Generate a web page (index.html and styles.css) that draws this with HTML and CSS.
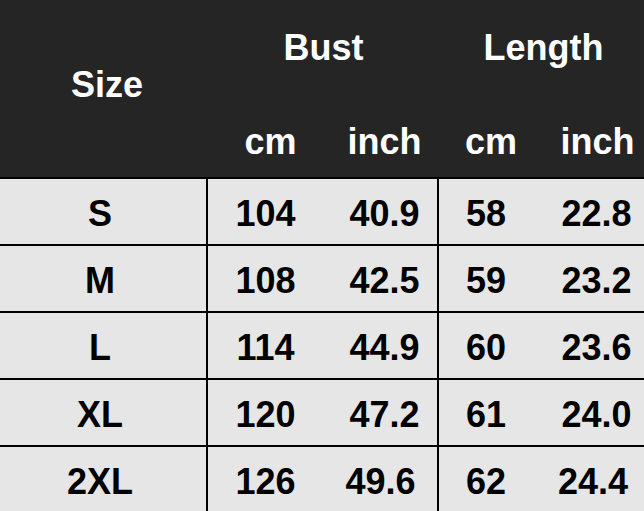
FILE: index.html
```html
<!DOCTYPE html>
<html>
<head>
<meta charset="utf-8">
<link rel="stylesheet" href="styles.css">
</head>
<body>
<div class="chart">
  <div class="head">
    <div class="h-size">Size</div>
    <div class="h-group h-bust">Bust</div>
    <div class="h-group h-length">Length</div>
    <div class="h-unit u-bcm">cm</div>
    <div class="h-unit u-binch">inch</div>
    <div class="h-unit u-lcm">cm</div>
    <div class="h-unit u-linch">inch</div>
  </div>
  <div class="row">
    <div class="c c-size">S</div><div class="c c-bcm">104</div><div class="c c-binch">40.9</div><div class="c c-lcm">58</div><div class="c c-linch">22.8</div>
  </div>
  <div class="row">
    <div class="c c-size">M</div><div class="c c-bcm">108</div><div class="c c-binch">42.5</div><div class="c c-lcm">59</div><div class="c c-linch">23.2</div>
  </div>
  <div class="row">
    <div class="c c-size">L</div><div class="c c-bcm">114</div><div class="c c-binch">44.9</div><div class="c c-lcm">60</div><div class="c c-linch">23.6</div>
  </div>
  <div class="row">
    <div class="c c-size">XL</div><div class="c c-bcm">120</div><div class="c c-binch">47.2</div><div class="c c-lcm">61</div><div class="c c-linch">24.0</div>
  </div>
  <div class="row row-last">
    <div class="c c-size">2XL</div><div class="c c-bcm">126</div><div class="c c-binch">49.6</div><div class="c c-lcm">62</div><div class="c c-linch">24.4</div>
  </div>
</div>
</body>
</html>
```
FILE: styles.css
```css
html, body {
  margin: 0;
  padding: 0;
  background: #e6e6e6;
}
body {
  width: 644px;
  height: 511px;
  overflow: hidden;
  font-family: "Liberation Sans", Arial, sans-serif;
  font-weight: bold;
  font-size: 36px;
  line-height: 36px;
}
.chart {
  width: 644px;
}
.head {
  display: grid;
  grid-template-columns: 208px 122px 109px 96px 109px;
  grid-template-rows: 96px 81px;
  background: #252525;
  color: #fff;
  border-bottom: 2px solid #000;
}
.h-size {
  grid-column: 1;
  grid-row: 1 / span 2;
  align-self: center;
  text-align: center;
  padding-left: 6px;
  padding-bottom: 8px;
}
.h-group {
  grid-row: 1;
  align-self: center;
  text-align: center;
}
.h-bust { grid-column: 2 / span 2; }
.h-length { grid-column: 4 / span 2; padding-left: 4px; }
.h-unit {
  grid-row: 2;
  align-self: end;
  padding-bottom: 17px;
  text-align: center;
}
.u-bcm { grid-column: 2; padding-left: 3px; }
.u-binch { grid-column: 3; }
.u-lcm { grid-column: 4; padding-left: 8px; }
.u-linch { grid-column: 5; padding-left: 16px; }

.row {
  display: grid;
  grid-template-columns: 208px 122px 109px 96px 109px;
  height: 65px;
  border-bottom: 2px solid #000;
  color: #000;
}
.row-last { border-bottom: none; }
.c {
  display: flex;
  align-items: center;
  justify-content: center;
  padding-top: 5px;
}
.c-size {
  border-right: 2px solid #000;
  padding-right: 6px;
}
.c-bcm { padding-right: 7px; }
.c-binch {
  border-right: 2px solid #000;
  padding-left: 2px;
}
.c-lcm { padding-right: 2px; }
.c-linch { padding-left: 14px; }
.row-last .c-binch { padding-left: 0; padding-right: 6px; }
.row-last .c-linch { padding-left: 7px; }
```
